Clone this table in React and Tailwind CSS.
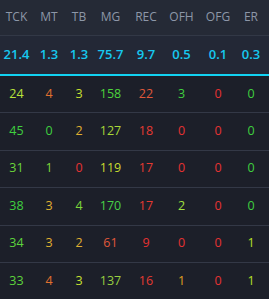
import React from "react";

const heads = ["TCK", "MT", "TB", "MG", "REC", "OFH", "OFG", "ER"];
const avgs = ["21.4", "1.3", "1.3", "75.7", "9.7", "0.5", "0.1", "0.3"];
const widths = ["w-[33px]", "w-[32px]", "w-[28px]", "w-[35px]", "w-[36px]", "w-[35px]", "w-[38px]", "w-[32px]"];

const rows = [
  [["24", "text-[#b8e03a]"], ["4", "text-[#e0702e]"], ["3", "text-[#c8e030]"], ["158", "text-[#4cd43c]"], ["22", "text-[#e0583a]"], ["3", "text-[#3fcf3f]"], ["0", "text-[#e53232]"], ["0", "text-[#3fcf3f]"]],
  [["45", "text-[#3fcf3f]"], ["0", "text-[#3fcf3f]"], ["2", "text-[#e0b030]"], ["127", "text-[#a8d838]"], ["18", "text-[#e53a32]"], ["0", "text-[#e53232]"], ["0", "text-[#e53232]"], ["0", "text-[#3fcf3f]"]],
  [["31", "text-[#6ad63a]"], ["1", "text-[#7cd83a]"], ["0", "text-[#e53232]"], ["119", "text-[#c8dc30]"], ["17", "text-[#e53a32]"], ["0", "text-[#e53232]"], ["0", "text-[#e53232]"], ["0", "text-[#3fcf3f]"]],
  [["38", "text-[#3fcf3f]"], ["3", "text-[#e0b030]"], ["4", "text-[#7cd83a]"], ["170", "text-[#48d048]"], ["17", "text-[#e53a32]"], ["2", "text-[#a0e040]"], ["0", "text-[#e53232]"], ["0", "text-[#3fcf3f]"]],
  [["34", "text-[#5cd43c]"], ["3", "text-[#e0b030]"], ["2", "text-[#e0b030]"], ["61", "text-[#e0583a]"], ["9", "text-[#e53232]"], ["0", "text-[#e53232]"], ["0", "text-[#e53232]"], ["1", "text-[#b8e028]"]],
  [["33", "text-[#5cd43c]"], ["4", "text-[#e0702e]"], ["3", "text-[#c8e030]"], ["137", "text-[#98d040]"], ["16", "text-[#e53a32]"], ["1", "text-[#e0a020]"], ["0", "text-[#e53232]"], ["1", "text-[#b8e028]"]],
];

export default function App() {
  return (
    <div className="w-[269px] h-[299px] overflow-hidden bg-[#1c1f29] font-['Open_Sans',sans-serif]">
      <table className="w-[269px] table-fixed border-collapse">
        <colgroup>
          {widths.map((w, i) => (
            <col key={i} className={w} />
          ))}
        </colgroup>
        <thead>
          <tr className="bg-[#252a36] h-[35px] border-b border-[#323846]">
            {heads.map((h) => (
              <th key={h} className="p-0 last:pr-[4px] text-[12px] font-normal text-[#8d97a8] text-center">
                {h}
              </th>
            ))}
          </tr>
          <tr className="bg-[#232836] h-[40px] border-b-2 border-[#12d2f2]">
            {avgs.map((a, i) => (
              <td key={i} className="p-0 last:pr-[4px] text-[13px] font-semibold text-[#16c8f0] text-center">
                {a}
              </td>
            ))}
          </tr>
        </thead>
        <tbody>
          {rows.map((r, i) => (
            <tr key={i} className="h-[37.5px] border-b border-[#333846]">
              {r.map(([v, c], j) => (
                <td key={j} className={`p-0 last:pr-[4px] text-[12.5px] text-center ${c}`}>
                  {v}
                </td>
              ))}
            </tr>
          ))}
        </tbody>
      </table>
    </div>
  );
}
